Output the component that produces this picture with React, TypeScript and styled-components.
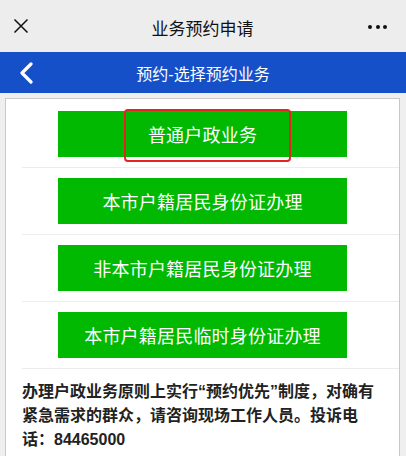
import React from 'react';
import styled, {createGlobalStyle} from 'styled-components';

const GlobalStyle = createGlobalStyle`
  html, body {
    margin: 0;
    padding: 0;
    background: #efefef;
  }
  body {
    font-family: "Liberation Sans", "Noto Sans CJK SC", sans-serif;
    color: #222;
  }
`;

const services = [
  '普通户政业务',
  '本市户籍居民身份证办理',
  '非本市户籍居民身份证办理',
  '本市户籍居民临时身份证办理',
];

export default function App() {
  return (
    <>
      <GlobalStyle />
      <Page>
        <TitleBar>
          <IconSlot>
            <svg width="16" height="16" viewBox="0 0 16 16">
              <path d="M1.5 1.5 L14.5 14.5 M14.5 1.5 L1.5 14.5" stroke="#111" strokeWidth="1.5" fill="none" />
            </svg>
          </IconSlot>
          <Title>业务预约申请</Title>
          <IconSlot $right>
            <Dots>
              <Dot />
              <Dot />
              <Dot />
            </Dots>
          </IconSlot>
        </TitleBar>
        <NavBar>
          <BackButton>
            <svg width="16" height="22" viewBox="0 0 16 22">
              <path d="M13 2 L4 11 L13 20" stroke="#fff" strokeWidth="3.2" fill="none" strokeLinecap="round" strokeLinejoin="round" />
            </svg>
          </BackButton>
          <NavTitle>预约-选择预约业务</NavTitle>
          <BackButton aria-hidden />
        </NavBar>
        <Card>
          {services.map((name, i) => (
            <React.Fragment key={name}>
              <Row>
                <ServiceButton>
                  {name}
                  {i === 0 && <Highlight />}
                </ServiceButton>
              </Row>
              <Divider />
            </React.Fragment>
          ))}
          <Notice>
            办理户政业务原则上实行“预约优先”制度，对确有紧急需求的群众，请咨询现场工作人员。投诉电话：84465000
          </Notice>
        </Card>
      </Page>
    </>
  );
}

const Page = styled.div`
  width: 406px;
  height: 456px;
  overflow: hidden;
  display: flex;
  flex-direction: column;
  background: #efefef;
`;

const TitleBar = styled.div`
  height: 52px;
  display: flex;
  align-items: center;
  justify-content: space-between;
  padding: 0 14px 0 13px;
  box-sizing: border-box;
  background: #ededed;
`;

const IconSlot = styled.div<{$right?: boolean}>`
  width: 24px;
  display: flex;
  justify-content: ${p => (p.$right ? 'flex-end' : 'flex-start')};
  align-items: center;
`;

const Title = styled.div`
  font-size: 17px;
  color: #111;
  padding-top: 2px;
`;

const Dots = styled.div`
  display: flex;
  gap: 3.5px;
  margin-right: 5px;
  margin-top: 2px;
`;

const Dot = styled.span`
  width: 4px;
  height: 4px;
  border-radius: 50%;
  background: #111;
`;

const NavBar = styled.div`
  height: 41px;
  display: flex;
  align-items: center;
  justify-content: space-between;
  padding: 0 18px;
  background: #1550c9;
`;

const BackButton = styled.div`
  width: 24px;
  display: flex;
  align-items: center;
`;

const NavTitle = styled.div`
  font-size: 16px;
  color: #fff;
`;

const Card = styled.div`
  margin: 5px 6px 0 5px;
  padding-top: 2px;
  background: #fff;
  border: 1px solid #c8c8c8;
  border-bottom: none;
  flex: 1;
`;

const Row = styled.div`
  padding: 10px 0;
  display: flex;
  justify-content: center;
`;

const ServiceButton = styled.div`
  position: relative;
  width: 289px;
  height: 46px;
  display: flex;
  align-items: center;
  justify-content: center;
  background: #00b900;
  color: #fff;
  font-size: 18px;
  letter-spacing: 0.2px;
`;

const Highlight = styled.span`
  position: absolute;
  top: -2px;
  bottom: -5px;
  left: 66px;
  width: 167px;
  border: 2px solid #e3261d;
  border-radius: 4px;
  box-sizing: border-box;
`;

const Divider = styled.div`
  height: 1px;
  margin-left: 16px;
  background: #ececec;
`;

const Notice = styled.p`
  margin: 0;
  padding: 11px 0 0 16px;
  max-width: 352px;
  font-size: 16px;
  line-height: 24px;
  font-weight: bold;
  color: #222;
`;
